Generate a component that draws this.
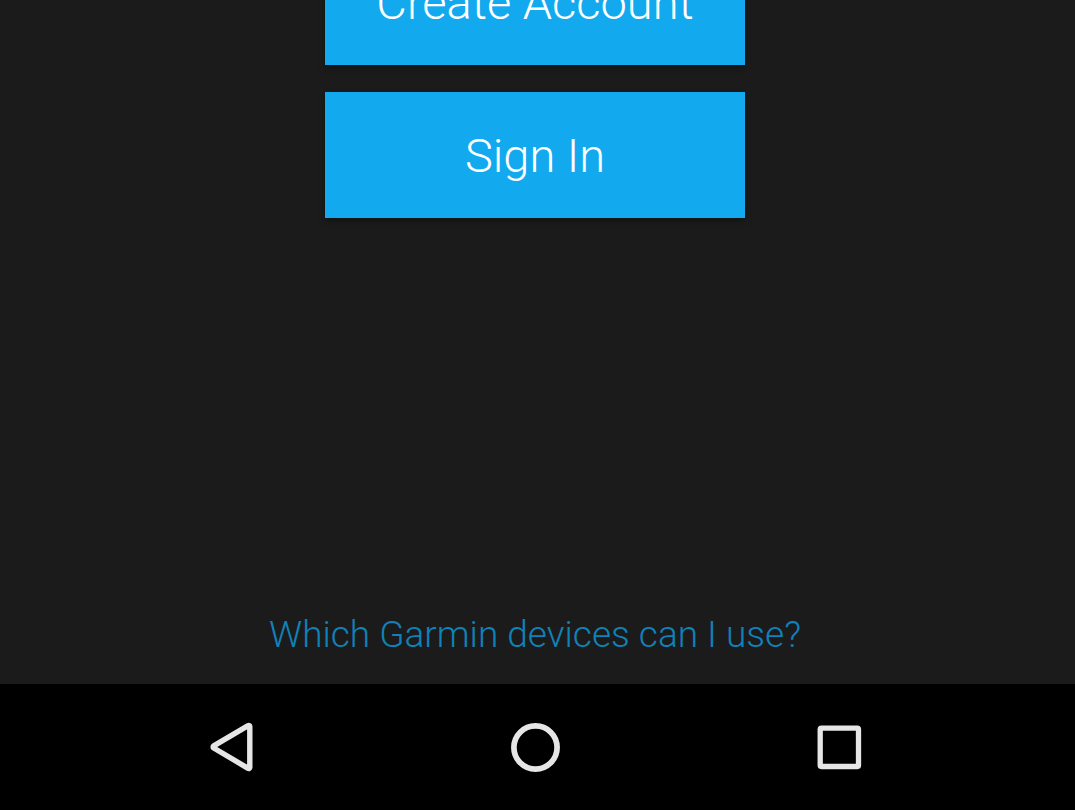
<main class="screen">
  <section class="content">
    <div class="actions">
      <button class="primary" type="button">Create Account</button>
      <button class="primary" type="button">Sign In</button>
    </div>
    <a class="help" href="#devices">Which Garmin devices can I use?</a>
  </section>
  <nav class="navbar" aria-label="System navigation">
    <button class="key" type="button" aria-label="Back">
      <svg viewBox="0 0 56 56"><path d="M46.800 7.700V48.300a1.100 1.100 0 0 1-1.700 1L10.700 29a1.300 1.300 0 0 1 0-2.200L45.100 6.700a1.100 1.100 0 0 1 1.700 1Z" stroke-width="5.400" /></svg>
    </button>
    <button class="key" type="button" aria-label="Home">
      <svg viewBox="0 0 56 56"><circle cx="28.500" cy="28.500" r="21.600" stroke-width="5.700" /></svg>
    </button>
    <button class="key" type="button" aria-label="Overview">
      <svg viewBox="0 0 56 56"><rect x="9.200" y="9.200" width="38.300" height="38.300" rx="1.200" stroke-width="5.300" /></svg>
    </button>
  </nav>
</main>

<style>
  :global(body) { margin: 0; background: #1b1b1b; }
  .screen {
    display: flex;
    flex-direction: column;
    min-height: 100vh;
    overflow: hidden;
    font-family: Roboto, sans-serif;
    font-weight: 300;
  }
  .content {
    flex: 1;
    display: flex;
    flex-direction: column;
    align-items: center;
    justify-content: space-between;
    padding: 0 5px 25px 0;
  }
  .actions {
    display: flex;
    flex-direction: column;
    gap: 27px;
    width: 420px;
    max-width: 100%;
    margin-top: -61px;
  }
  .primary {
    height: 126px;
    padding: 0;
    border: 0;
    background: #12a9ef;
    color: #fff;
    font: inherit;
    font-size: 47px;
    box-shadow: 0 3px 6px rgba(0, 0, 0, 0.35);
  }
  .help {
    color: #0f82b8;
    font-size: 37px;
    line-height: 48px;
    text-decoration: none;
  }
  .navbar {
    display: flex;
    justify-content: center;
    height: 126px;
    padding-right: 5px;
    background: #000;
  }
  .key {
    display: flex;
    align-items: center;
    justify-content: center;
    width: 304px;
    padding: 0;
    border: 0;
    background: none;
  }
  svg {
    width: 56px;
    height: 56px;
    fill: none;
    stroke: #e6e6e6;
    stroke-linejoin: round;
  }
</style>
